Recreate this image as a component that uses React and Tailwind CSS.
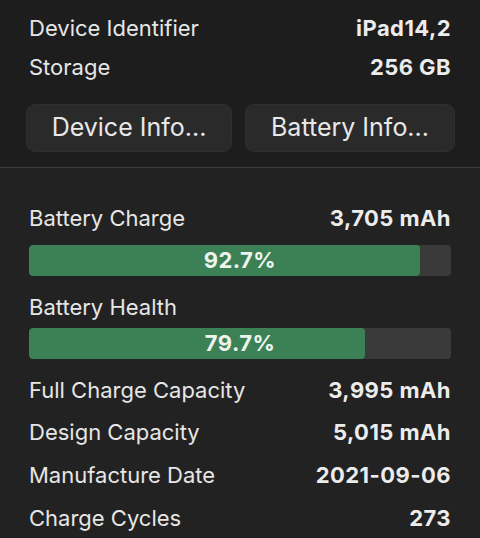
const deviceRows = [
  { label: "Device Identifier", value: "iPad14,2" },
  { label: "Storage", value: "256 GB" },
];

const batteryRows = [
  { label: "Full Charge Capacity", value: "3,995 mAh", gap: "mt-[17px]" },
  { label: "Design Capacity", value: "5,015 mAh", gap: "mt-[14px]" },
  { label: "Manufacture Date", value: "2021-09-06", gap: "mt-[15px]" },
  { label: "Charge Cycles", value: "273", gap: "mt-[15px]" },
];

function Row({ label, value, className = "" }) {
  return (
    <div className={`flex h-[28px] items-center justify-between ${className}`}>
      <span className="text-[#e6e6e6]">{label}</span>
      <span className="font-bold tracking-[0.02em] text-[#ececec]">{value}</span>
    </div>
  );
}

function Bar({ percent }) {
  return (
    <div className="relative h-[31px] w-full overflow-hidden rounded-[4px] bg-[#3a3a3b]">
      <div className="h-full rounded-[4px] bg-[#3b8155]" style={{ width: `${percent}%` }} />
      <span className="absolute inset-0 flex items-center justify-center font-bold tracking-[0.02em] text-[#eef3ee]">
        {percent}%
      </span>
    </div>
  );
}

export default function App() {
  return (
    <div
      className="flex h-[538px] w-[480px] flex-col overflow-hidden bg-[#1d1d1d] text-[22px]"
      style={{ fontFamily: "Inter, 'Noto Sans', sans-serif" }}
    >
      <section className="border-b border-[#3b3b3b] pl-[29px] pr-[29px] pt-[14px] pb-[15px]">
        <Row {...deviceRows[0]} />
        <Row {...deviceRows[1]} className="mt-[11px]" />
        <div className="-ml-[3px] -mr-[4px] mt-[23px] flex gap-[13px]">
          <button className="h-[48px] w-[206px] rounded-[9px] border border-[#2f2f2f] bg-[#2a2a2a] text-[25px] text-[#e8e8e8]">
            Device Info...
          </button>
          <button className="h-[48px] flex-1 rounded-[9px] border border-[#2f2f2f] bg-[#2a2a2a] text-[25px] text-[#e8e8e8]">
            Battery Info...
          </button>
        </div>
      </section>
      <section className="flex-1 bg-[#222222] px-[29px] pt-[36px]">
        <Row label="Battery Charge" value="3,705 mAh" />
        <div className="mt-[13px]">
          <Bar percent={92.7} />
        </div>
        <Row label="Battery Health" value="" className="mt-[17px]" />
        <div className="mt-[7px]">
          <Bar percent={79.7} />
        </div>
        {batteryRows.map((row) => (
          <Row key={row.label} label={row.label} value={row.value} className={row.gap} />
        ))}
      </section>
    </div>
  );
}
